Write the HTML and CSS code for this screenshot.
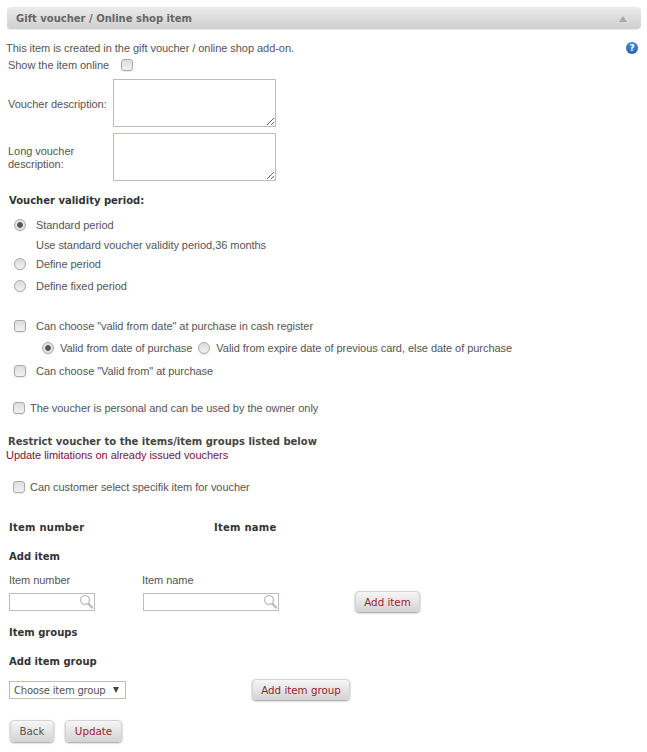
FILE: index.html
```html
<!DOCTYPE html>
<html lang="en">
<head>
  <meta charset="UTF-8">
  <title>Gift voucher / Online shop item</title>
  <link rel="stylesheet" href="styles.css">
</head>
<body>
  <div class="panel-header">
    <h2>Gift voucher / Online shop item</h2>
    <span class="collapse-arrow"></span>
  </div>

  <form class="voucher-form">
    <div class="row intro">
      <span>This item is created in the gift voucher / online shop add-on.</span>
      <span class="help-icon">?</span>
    </div>
    <div class="row show-online">
      <label class="field-label">Show the item online</label>
      <input type="checkbox">
    </div>

    <div class="text-row first-text">
      <label class="field-label">Voucher description:</label>
      <textarea></textarea>
    </div>
    <div class="text-row second-text">
      <label class="field-label">Long voucher description:</label>
      <textarea></textarea>
    </div>

    <h4 class="row validity-title">Voucher validity period:</h4>
    <div class="row option standard"><input type="radio" name="period" checked><span>Standard period</span></div>
    <div class="row option-note">Use standard voucher validity period,36 months</div>
    <div class="row option define"><input type="radio" name="period"><span>Define period</span></div>
    <div class="row option fixed"><input type="radio" name="period"><span>Define fixed period</span></div>

    <div class="row option cash"><input type="checkbox"><span>Can choose "valid from date" at purchase in cash register</span></div>
    <div class="row sub-options">
      <input type="radio" name="from" checked><span>Valid from date of purchase</span>
      <input type="radio" name="from"><span>Valid from expire date of previous card, else date of purchase</span>
    </div>
    <div class="row option at-purchase"><input type="checkbox"><span>Can choose "Valid from" at purchase</span></div>

    <div class="row tight-option personal"><input type="checkbox"><span>The voucher is personal and can be used by the owner only</span></div>

    <h4 class="row restrict-title">Restrict voucher to the items/item groups listed below</h4>
    <div class="row update-note"><a href="#">Update limitations on already issued vouchers</a></div>
    <div class="row tight-option specific"><input type="checkbox"><span>Can customer select specifik item for voucher</span></div>

    <div class="row item-columns">
      <h4>Item number</h4>
      <h4>Item name</h4>
    </div>

    <h4 class="row add-item-title">Add item</h4>
    <div class="row add-item-labels">
      <label>Item number</label>
      <label>Item name</label>
    </div>
    <div class="add-item-row">
      <div class="search-box number-box">
        <input type="text">
        <svg class="search-icon" width="15" height="16" viewBox="0 0 15 16"><circle cx="6" cy="6" r="4.5" fill="#fff" stroke="#c4c4c4" stroke-width="1.5"/><path d="M9.5 9.8l3.6 3.8" stroke="#bbb" stroke-width="2.2" stroke-linecap="round"/></svg>
      </div>
      <div class="search-box name-box">
        <input type="text">
        <svg class="search-icon" width="15" height="16" viewBox="0 0 15 16"><circle cx="6" cy="6" r="4.5" fill="#fff" stroke="#c4c4c4" stroke-width="1.5"/><path d="M9.5 9.8l3.6 3.8" stroke="#bbb" stroke-width="2.2" stroke-linecap="round"/></svg>
      </div>
      <button type="button" class="btn add-item-btn">Add item</button>
    </div>

    <h4 class="row groups-title">Item groups</h4>
    <h4 class="row add-group-title">Add item group</h4>
    <div class="add-group-row">
      <div class="select-box"><span>Choose item group</span><span class="select-arrow"></span></div>
      <button type="button" class="btn add-group-btn">Add item group</button>
    </div>

    <div class="actions">
      <button type="button" class="btn back-btn">Back</button>
      <button type="button" class="btn update-btn">Update</button>
    </div>
  </form>
</body>
</html>
```

FILE: styles.css
```css
body {
  margin: 0;
  font-family: "Liberation Sans", Arial, sans-serif;
  font-size: 11px;
  letter-spacing: -0.05px;
  color: #555;
  background-color: #fff;
}
h2, h4 {
  margin: 0;
}
h4 {
  font-family: "DejaVu Sans", Verdana, sans-serif;
  font-size: 10px;
  letter-spacing: 0;
  color: #333;
}
input[type=checkbox], input[type=radio] {
  appearance: none;
  flex: none;
  width: 12px;
  height: 12px;
  margin: 0;
  border: 1px solid #a9a9a9;
  background: linear-gradient(#dcdcdc, #f2f2f2);
  box-shadow: 0 1px 1px rgba(0,0,0,0.08);
}
input[type=checkbox] {
  border-radius: 3px;
}
input[type=radio] {
  border-radius: 50%;
}
input[type=radio]:checked {
  background: radial-gradient(circle, #555 0, #555 2.4px, #e4e4e4 3.4px);
}

/* header bar */
.panel-header {
  position: relative;
  display: flex;
  align-items: center;
  justify-content: space-between;
  box-sizing: border-box;
  height: 22px;
  margin: 7px 6px 0 7px;
  padding: 1px 14px 0 9px;
  background: linear-gradient(#ebebeb, #cfcfcf);
  border-radius: 4px;
  box-shadow: -1px 2px 0 -1px #e8e8e8;
}
.panel-header h2 {
  font-family: "DejaVu Sans", Verdana, sans-serif;
  font-size: 10px;
  letter-spacing: 0;
  color: #666;
}
.collapse-arrow {
  width: 0;
  height: 0;
  border-left: 4px solid transparent;
  border-right: 4px solid transparent;
  border-bottom: 6px solid #aaa;
}

/* form rows */
.row {
  display: flex;
  align-items: center;
  height: 16px;
  line-height: 16px;
}
.intro {
  justify-content: space-between;
  margin: 11px 9px 0 6px;
}
.help-icon {
  width: 12px;
  height: 12px;
  border-radius: 50%;
  background: radial-gradient(circle at 50% 30%, #4a90dc, #1a56a8);
  color: #fff;
  font-family: "DejaVu Sans", sans-serif;
  font-size: 9px;
  font-weight: bold;
  line-height: 12px;
  text-align: center;
}
.show-online {
  margin: 1px 0 0 8px;
}
.show-online .field-label {
  width: 113px;
}
.text-row {
  display: flex;
  align-items: center;
  margin-left: 8px;
}
.first-text {
  margin-top: 6px;
}
.second-text {
  margin-top: 6px;
}
.text-row .field-label {
  width: 105px;
  padding-top: 2px;
  line-height: 13px;
}
textarea {
  box-sizing: border-box;
  width: 163px;
  height: 48px;
  margin: 0;
  border: 1px solid #c2bdb4;
  background-color: #fff;
}
.validity-title {
  margin: 12px 0 0 9px;
}
.option {
  margin-left: 14px;
  gap: 10px;
}
.standard {
  margin-top: 8px;
}
.option-note {
  margin: 4px 0 0 36px;
}
.define {
  margin-top: 3px;
}
.fixed {
  margin-top: 6px;
}
.cash {
  margin-top: 24px;
}
.sub-options {
  margin: 6px 0 0 42px;
  gap: 6px;
}
.at-purchase {
  margin-top: 7px;
}
.tight-option {
  margin-left: 13px;
  gap: 5px;
}
.personal {
  margin-top: 21px;
}
.restrict-title {
  height: 14px;
  margin: 19px 0 0 8px;
  color: #444;
}
.update-note {
  height: 14px;
  margin: -1px 0 0 6px;
}
.update-note a {
  color: #7c1040;
  text-decoration: none;
}
.specific {
  margin-top: 17px;
}
.item-columns {
  margin: 25px 0 0 9px;
}
.item-columns h4 {
  width: 205px;
  letter-spacing: 0.25px;
}
.add-item-title {
  margin: 13px 0 0 9px;
}
.add-item-labels {
  margin: 7px 0 0 9px;
}
.add-item-labels label {
  width: 133px;
}
.add-item-row {
  display: flex;
  align-items: center;
  height: 21px;
  margin: 3px 0 0 9px;
}
.search-box {
  position: relative;
  height: 18px;
}
.search-box input {
  box-sizing: border-box;
  width: 100%;
  height: 18px;
  margin: 0;
  border: 1px solid #c2bdb4;
  background-color: #fff;
}
.number-box {
  width: 86px;
  margin-right: 48px;
}
.name-box {
  width: 136px;
  margin-right: 76px;
}
.search-icon {
  position: absolute;
  top: 1px;
  right: 1px;
}
.groups-title {
  margin: 13px 0 0 9px;
}
.add-group-title {
  margin: 13px 0 0 9px;
}
.add-group-row {
  display: flex;
  align-items: center;
  height: 21px;
  margin: 9px 0 0 9px;
}
.select-box {
  display: flex;
  flex: none;
  align-items: center;
  justify-content: space-between;
  box-sizing: border-box;
  width: 117px;
  height: 18px;
  margin-right: 126px;
  padding: 1px 6px 0 4px;
  border: 1px solid #c2bdb4;
  font-family: "DejaVu Sans", Verdana, sans-serif;
  font-size: 10px;
  letter-spacing: -0.2px;
  white-space: nowrap;
}
.select-arrow {
  width: 0;
  height: 0;
  border-left: 3.5px solid transparent;
  border-right: 3.5px solid transparent;
  border-top: 6px solid #444;
}

/* buttons */
.btn {
  height: 21px;
  padding: 0;
  border: 1px solid #d4d4d4;
  border-radius: 4px;
  background: linear-gradient(#f6f6f6, #d4d4d4);
  box-shadow: 0 1px 2px rgba(0,0,0,0.4);
  font-family: "DejaVu Sans", Verdana, sans-serif;
  font-size: 10.3px;
  letter-spacing: 0;
  color: #9b1c31;
  cursor: pointer;
}
.add-item-btn {
  width: 65px;
}
.add-group-btn {
  width: 98px;
}
.actions {
  display: flex;
  gap: 11px;
  margin: 20px 0 0 10px;
  padding-bottom: 9px;
}
.back-btn {
  width: 44px;
  height: 22px;
  color: #555;
}
.update-btn {
  width: 57px;
  height: 22px;
}
```
